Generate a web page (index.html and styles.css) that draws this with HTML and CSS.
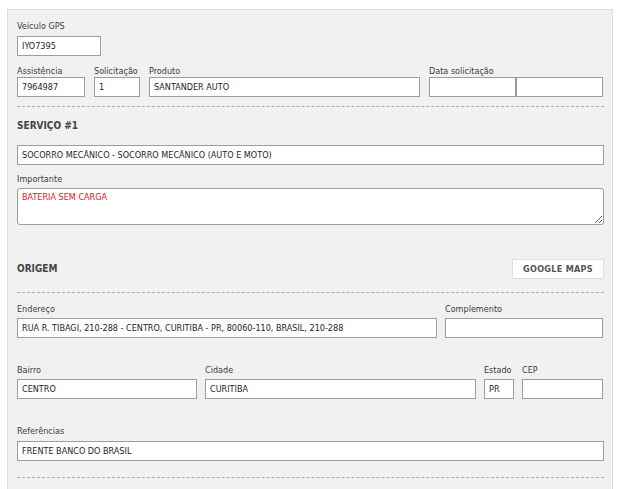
FILE: index.html
```html
<!DOCTYPE html>
<html lang="pt-BR">
<head>
<meta charset="utf-8">
<title>Serviço</title>
<link rel="stylesheet" href="styles.css">
</head>
<body>
<div class="panel">
  <div class="field row1">
    <label class="lbl">Veículo GPS</label>
    <input class="inp w-gps" type="text" value="IYO7395" readonly>
  </div>

  <div class="grid row2">
    <div class="field">
      <label class="lbl">Assistência</label>
      <input class="inp" type="text" value="7964987" readonly>
    </div>
    <div class="field">
      <label class="lbl">Solicitação</label>
      <input class="inp" type="text" value="1" readonly>
    </div>
    <div class="field">
      <label class="lbl">Produto</label>
      <input class="inp" type="text" value="SANTANDER AUTO" readonly>
    </div>
    <div class="field">
      <label class="lbl">Data solicitação</label>
      <div class="pair">
        <input class="inp" type="text" value="" readonly>
        <input class="inp" type="text" value="" readonly>
      </div>
    </div>
  </div>

  <hr class="dash dash1">

  <h3 class="heading h-serv">SERVIÇO #1</h3>
  <input class="inp full" type="text" value="SOCORRO MECÂNICO - SOCORRO MECÂNICO (AUTO E MOTO)" readonly>

  <div class="field imp">
    <label class="lbl">Importante</label>
    <textarea class="area" readonly>BATERIA SEM CARGA</textarea>
  </div>

  <div class="head-row">
    <h3 class="heading">ORIGEM</h3>
    <button class="btn" type="button">GOOGLE MAPS</button>
  </div>

  <hr class="dash dash2">

  <div class="grid row-end">
    <div class="field">
      <label class="lbl">Endereço</label>
      <input class="inp" type="text" value="RUA R. TIBAGI, 210-288 - CENTRO, CURITIBA - PR, 80060-110, BRASIL, 210-288" readonly>
    </div>
    <div class="field">
      <label class="lbl">Complemento</label>
      <input class="inp" type="text" value="" readonly>
    </div>
  </div>

  <div class="grid row-bairro">
    <div class="field">
      <label class="lbl">Bairro</label>
      <input class="inp" type="text" value="CENTRO" readonly>
    </div>
    <div class="field">
      <label class="lbl">Cidade</label>
      <input class="inp" type="text" value="CURITIBA" readonly>
    </div>
    <div class="field">
      <label class="lbl">Estado</label>
      <input class="inp" type="text" value="PR" readonly>
    </div>
    <div class="field">
      <label class="lbl">CEP</label>
      <input class="inp" type="text" value="" readonly>
    </div>
  </div>

  <div class="field ref">
    <label class="lbl ref-lbl">Referências</label>
    <input class="inp full" type="text" value="FRENTE BANCO DO BRASIL" readonly>
  </div>

  <hr class="dash dash3">
</div>
</body>
</html>
```

FILE: styles.css
```css
* { box-sizing: border-box; }

html, body {
  margin: 0;
  padding: 0;
  background: #ffffff;
}

body {
  font-family: "DejaVu Sans Condensed", "DejaVu Sans", sans-serif;
  font-stretch: condensed;
  font-size: 9px;
  color: #333;
}

.panel {
  margin: 9px 0 0 7px;
  width: 606px;
  height: 490px;
  background: #f1f1f1;
  border: 1px solid #dcdcdc;
  border-bottom: 0;
  padding: 10px 8px 0 9px;
}

.field {
  display: flex;
  flex-direction: column;
}

.lbl {
  display: block;
  line-height: 12px;
  height: 12px;
  color: #3c3c3c;
  margin-bottom: 3px;
  white-space: nowrap;
}

.row1 .lbl { margin-bottom: 4px; }

.inp {
  display: block;
  width: 100%;
  height: 20px;
  margin: 0;
  padding: 0 4px;
  border: 1px solid #9d9d9d;
  border-radius: 0;
  background: #fff;
  font-family: inherit;
  font-stretch: condensed;
  font-size: 9px;
  color: #1e1e1e;
  outline: none;
}

.w-gps { width: 84px; }

.grid { display: grid; }

.row2 {
  margin-top: 9px;
  grid-template-columns: 68px 46px 271px 174px;
  column-gap: 9px;
}
.row2 .lbl { margin-bottom: 0; }

.pair {
  display: grid;
  grid-template-columns: 87px 87px;
}

.dash {
  border: 0;
  border-top: 1px dashed #ababab;
  height: 0;
  margin: 0;
}
.dash1 { margin-top: 9px; }
.dash2 { margin-top: 13px; }
.dash3 { margin-top: 16px; }

.heading {
  margin: 0;
  font-size: 10px;
  font-weight: bold;
  line-height: 12px;
  color: #444;
}

.h-serv {
  margin-top: 13px;
  margin-bottom: 13px;
}

.full { width: 100%; }

.imp { margin-top: 8px; }

.area {
  display: block;
  width: 100%;
  height: 37px;
  margin: 0;
  padding: 3px 4px;
  border: 1px solid #9d9d9d;
  border-radius: 3px;
  background: #fff;
  font-family: inherit;
  font-stretch: condensed;
  font-size: 9px;
  line-height: 11px;
  color: #f0101a;
  outline: none;
  resize: vertical;
}

.head-row {
  margin-top: 34px;
  display: flex;
  align-items: center;
  justify-content: space-between;
  height: 20px;
}

.btn {
  width: 92px;
  height: 20px;
  margin: 0;
  padding: 0;
  background: #fff;
  border: 1px solid #dedede;
  font-family: inherit;
  font-stretch: condensed;
  font-size: 9px;
  font-weight: bold;
  letter-spacing: 0.3px;
  color: #555;
}

.row-end {
  margin-top: 10px;
  grid-template-columns: 420px 158px;
  column-gap: 8px;
}

.row-bairro {
  margin-top: 26px;
  grid-template-columns: 180px 271px 30px 81px;
  column-gap: 8px;
}

.ref { margin-top: 26px; }
.ref-lbl { margin-bottom: 4px; }
```
